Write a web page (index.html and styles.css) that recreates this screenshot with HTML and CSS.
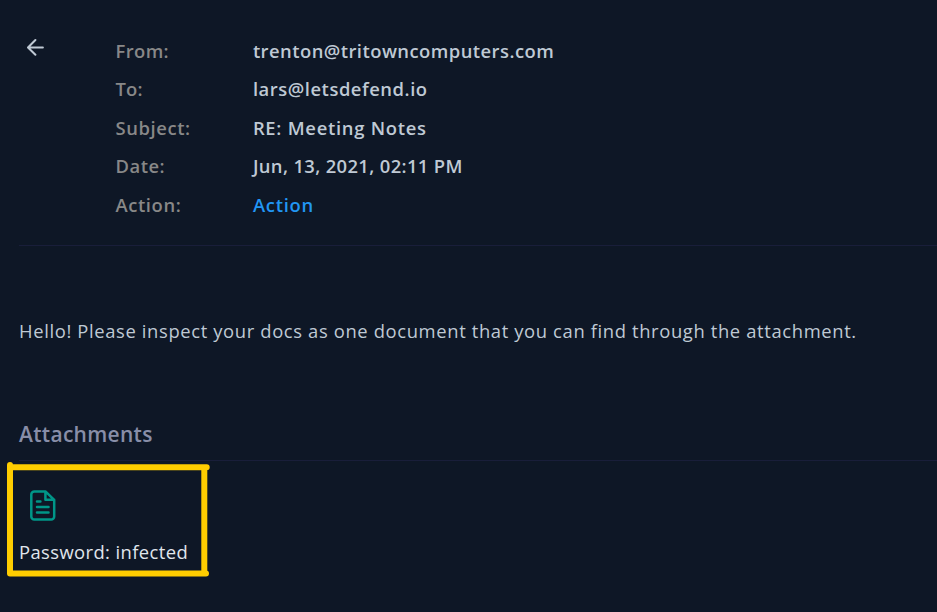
FILE: index.html
```html
<!DOCTYPE html>
<html lang="en">
<head>
<meta charset="utf-8">
<title>RE: Meeting Notes</title>
<link rel="stylesheet" href="styles.css">
</head>
<body>
<main class="mail">
  <header class="mail-header">
    <a class="back" href="#" aria-label="Back">
      <svg width="18" height="19" viewBox="0 0 18 19" fill="none" stroke="currentColor" stroke-width="2" stroke-linecap="round" stroke-linejoin="round"><path d="M15.900 9.500H1.200M8.400 2L1 9.500l7.400 7.300"/></svg>
    </a>
    <dl class="fields">
      <dt class="f-from">From:</dt><dd class="v-from">trenton@tritowncomputers.com</dd>
      <dt class="f-to">To:</dt><dd class="v-to">lars@letsdefend.io</dd>
      <dt class="f-subject">Subject:</dt><dd class="v-subject">RE: Meeting Notes</dd>
      <dt class="f-date">Date:</dt><dd class="v-date">Jun, 13, 2021, 02:11 PM</dd>
      <dt class="f-action">Action:</dt><dd class="v-action"><a class="action" href="#">Action</a></dd>
    </dl>
  </header>
  <p class="message">Hello! Please inspect your docs as one document that you can find through the attachment.</p>
  <section class="attachments">
    <h2 class="title">Attachments</h2>
    <div class="attachment">
      <svg class="file" width="26" height="31" viewBox="0 0 26 31" fill="none" stroke="currentColor" stroke-width="2.5" stroke-linecap="round" stroke-linejoin="round"><path d="M15.4 1.4H4.3a3 3 0 0 0-3 3v22a3 3 0 0 0 3 3h16.9a3 3 0 0 0 3-3V9.8zM15.4 1.4v8.4h8.8M7 11.5h3.4M7 17h11.5M7 22.5h11.5"/></svg>
      <span class="password">Password: infected</span>
      <svg class="marker" width="205" height="118" viewBox="0 0 205 118" fill="none" stroke="#ffcd00" stroke-width="6" stroke-linecap="round" stroke-linejoin="round"><path d="M4 4V112.500H200M4 6.200H200.700M198.300 6.200V112.500"/></svg>
    </div>
  </section>
</main>
</body>
</html>
```
FILE: styles.css
```css
* { box-sizing: border-box; }
body {
  margin: 0;
  background: #0e1726;
  color: #bfc9d4;
  font-family: "Open Sans", "Noto Sans", sans-serif;
  font-size: 18.4px;
}
a { color: inherit; text-decoration: none; }
.mail { height: 612px; padding-left: 19px; overflow: hidden; }
.mail-header {
  display: flex;
  height: 246px;
  padding-top: 32px;
  border-bottom: 1px solid #191e3a;
}
.back { width: 96.500px; padding: 6px 0 0 8px; }
.back svg { display: block; }
.fields {
  display: grid;
  grid-template-columns: 137.400px 1fr;
  grid-template-rows: 38px 39px 38px 39px 38px;
  align-items: start;
  flex: 1;
  margin: 0;
  font-weight: 600;
  line-height: 38px;
  letter-spacing: 0.5px;
  white-space: nowrap;
}
dt { color: #888888; }
dd { margin: 0; }
.f-from { letter-spacing: 0.4px; }
.f-to { letter-spacing: 0.2px; }
.f-subject, .f-action { letter-spacing: 0.6px; }
.v-from { letter-spacing: 0.46px; }
.v-to { letter-spacing: 0.54px; }
.v-subject, .v-action { letter-spacing: 0.73px; }
.v-date { letter-spacing: 0.37px; }
.action { color: #2196f3; }
.message {
  height: 38px;
  margin: 66px 0 0;
  line-height: 38px;
  letter-spacing: 0.63px;
  white-space: nowrap;
}
.title {
  height: 50px;
  margin: 61px 0 0;
  padding-top: 7px;
  border-bottom: 1px solid #191e3a;
  color: #888ea8;
  font-size: 21px;
  font-weight: 600;
  line-height: 32px;
  letter-spacing: 0.3px;
}
.attachment { position: relative; width: 190px; padding-top: 29px; }
.file { display: block; margin-left: 10.500px; color: #009688; }
.password {
  display: block;
  margin-top: 16px;
  color: #e0e6ed;
  line-height: 30px;
  letter-spacing: 0.4px;
  white-space: nowrap;
}
.marker { position: absolute; left: -13px; top: 0; }
```
